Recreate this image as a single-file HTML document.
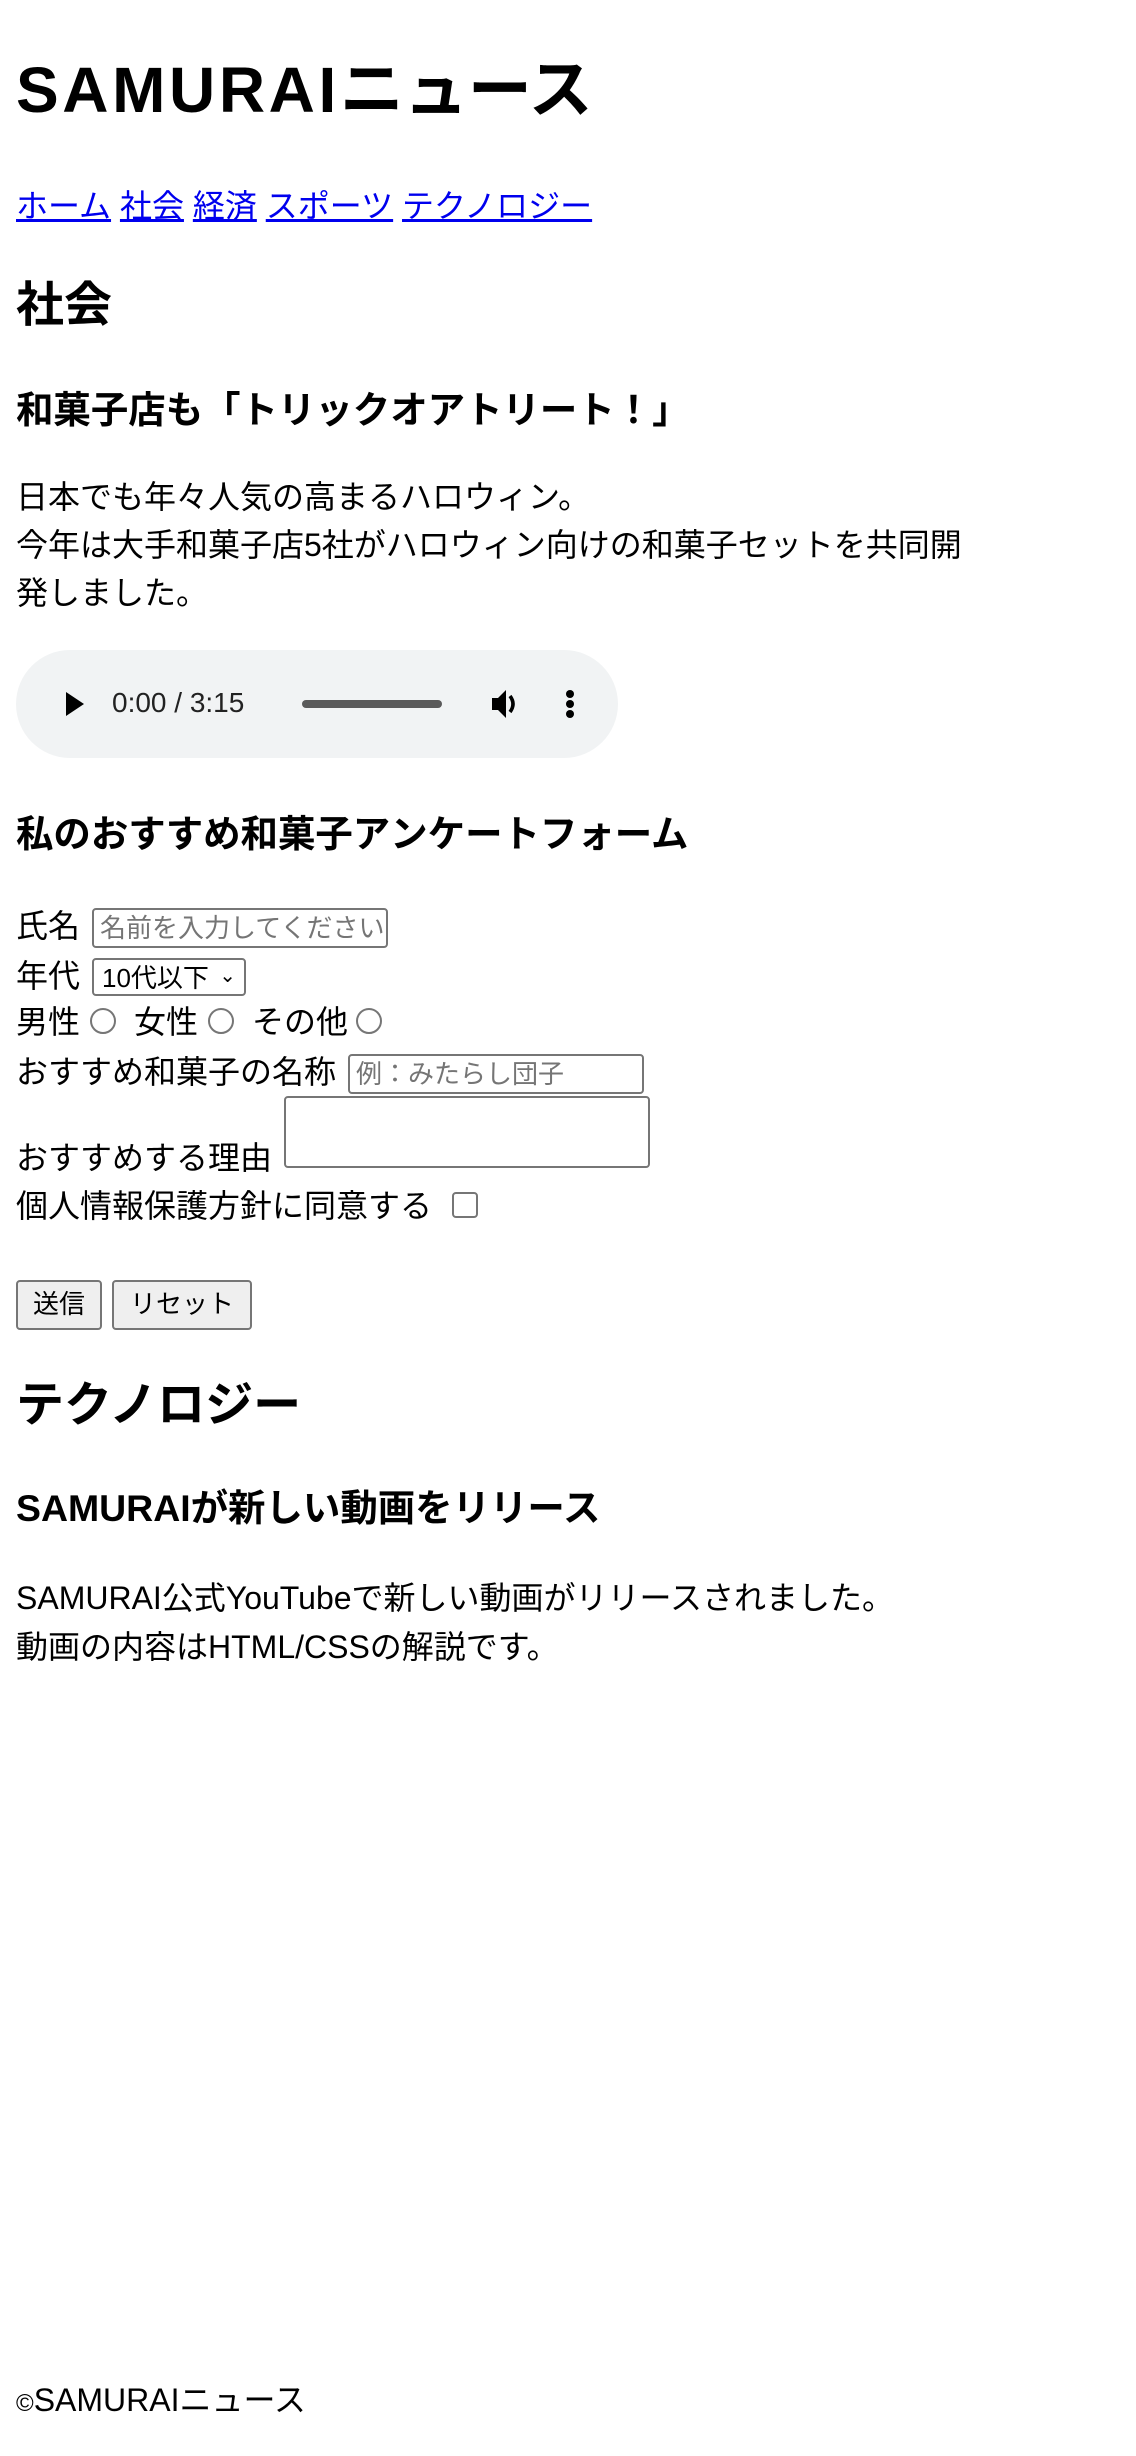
<!DOCTYPE html>
<html><head><meta charset="utf-8"><style>
html,body{margin:0;padding:0;width:1136px;height:2456px;overflow:hidden;background:#fff}
#w{zoom:2;width:568px;height:1228px;position:relative;overflow:hidden;font-family:"Liberation Sans","Noto Sans CJK JP",sans-serif;font-size:16px;color:#000}
.a{position:absolute;left:8px;white-space:nowrap}
h1,h2,h3,p{margin:0}
h1{font-size:32px;line-height:40px}
h2{font-size:24px;line-height:30px}
h3{font-size:18.72px;line-height:24px}
a{color:#00e}
.inp{position:absolute;border:1px solid #767676;border-radius:2px;background:#fff;box-sizing:border-box;font-size:13px;color:#757575;padding:0 3px;line-height:18px;overflow:hidden;white-space:nowrap}
.rad{position:absolute;width:11px;height:11px;border:1px solid #767676;border-radius:50%}
.btn{position:absolute;border:1px solid #767676;border-radius:2px;background:#efefef;box-sizing:border-box;font-size:13px;text-align:center;line-height:22px}
</style></head><body><div id="w">
<h1 class="a" style="top:25px"><span style="letter-spacing:1.8px">SAMURAI</span>ニュース</h1>
<div class="a" style="top:91px;line-height:24px"><a href="#">ホーム</a> <a href="#">社会</a> <a href="#">経済</a> <a href="#">スポーツ</a> <a href="#">テクノロジー</a></div>
<h2 class="a" style="top:138px">社会</h2>
<h3 class="a" style="top:193px">和菓子店も「トリックオアトリート！」</h3>
<p class="a" style="top:237px;line-height:23.9px">日本でも年々人気の高まるハロウィン。<br>今年は大手和菓子店5社がハロウィン向けの和菓子セットを共同開<br>発しました。</p>
<div style="position:absolute;left:8px;top:325px;width:301px;height:54px;background:#f1f3f4;border-radius:27px">
<svg style="position:absolute;left:22px;top:19px" width="14" height="16" viewBox="0 0 14 16"><path d="M3 2L12 8L3 14Z" fill="#000"/></svg>
<span style="position:absolute;left:48px;top:18px;font-size:14px;color:#222;line-height:17px">0:00 / 3:15</span>
<div style="position:absolute;left:143px;top:25px;width:70px;height:4px;border-radius:2px;background:#5a5a5a"></div>
<svg style="position:absolute;left:236px;top:18px" width="18" height="18" viewBox="0 0 18 18"><path d="M2 6H5L9 2V16L5 12H2Z" fill="#000"/><path d="M11 5Q14 9 11 13" stroke="#000" stroke-width="1.8" fill="none"/></svg>
<div style="position:absolute;left:275px;top:20px;width:4px;height:4px;border-radius:2px;background:#000;box-shadow:0 5px 0 #000,0 10px 0 #000"></div>
</div>
<h3 class="a" style="top:405px">私のおすすめ和菓子アンケートフォーム</h3>
<div class="a" style="top:451px;line-height:24px">氏名</div>
<div class="inp" style="left:46px;top:454px;width:148px;height:20px">名前を入力してください</div>
<div class="a" style="top:476px;line-height:24px">年代</div>
<div class="inp" style="left:46px;top:479px;width:77px;height:19px;color:#000;padding-left:4px">10代以下<span style="position:absolute;right:4px;top:-1px;font-size:10px">&#8964;</span></div>
<div class="a" style="top:499px;line-height:24px">男性</div>
<div class="a" style="left:67px;top:499px;line-height:24px">女性</div>
<div class="a" style="left:126px;top:499px;line-height:24px">その他</div>
<div class="rad" style="left:45px;top:504px"></div>
<div class="rad" style="left:104px;top:504px"></div>
<div class="rad" style="left:178px;top:504px"></div>
<div class="a" style="top:524px;line-height:24px">おすすめ和菓子の名称</div>
<div class="inp" style="left:174px;top:527px;width:148px;height:20px">例：みたらし団子</div>
<div class="a" style="top:567px;line-height:24px">おすすめする理由</div>
<div class="inp" style="left:142px;top:548px;width:183px;height:36px"></div>
<div class="a" style="top:591px;line-height:24px">個人情報保護方針に同意する</div>
<div style="position:absolute;left:226px;top:596px;width:11px;height:11px;border:1px solid #767676;border-radius:2px"></div>
<div class="btn" style="left:8px;top:640px;width:43px;height:25px">送信</div>
<div class="btn" style="left:56px;top:640px;width:70px;height:25px">リセット</div>
<h2 class="a" style="top:688px">テクノロジー</h2>
<h3 class="a" style="top:742px">SAMURAIが新しい動画をリリース</h3>
<p class="a" style="top:787px;line-height:24.3px">SAMURAI公式YouTubeで新しい動画がリリースされました。<br>動画の内容はHTML/CSSの解説です。</p>
<div class="a" style="top:1188px;line-height:24px"><span style="font-size:12px">©</span>SAMURAIニュース</div>
</div></body></html>
